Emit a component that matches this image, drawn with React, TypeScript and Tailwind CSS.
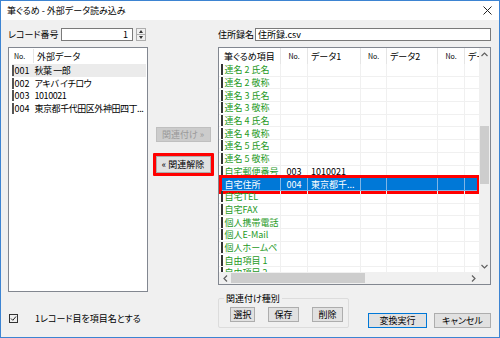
import React from "react";

const FONT = "font-['Noto_Sans_CJK_JP','Noto_Sans',sans-serif] [font-feature-settings:'palt']";

const gridRows: [string, string, string, boolean][] = [
  ["連名 2 氏名", "", "", false],
  ["連名 2 敬称", "", "", false],
  ["連名 3 氏名", "", "", false],
  ["連名 3 敬称", "", "", false],
  ["連名 4 氏名", "", "", false],
  ["連名 4 敬称", "", "", false],
  ["連名 5 氏名", "", "", false],
  ["連名 5 敬称", "", "", false],
  ["自宅郵便番号", "003", "1010021", false],
  ["自宅住所", "004", "東京都千...", true],
  ["自宅TEL", "", "", false],
  ["自宅FAX", "", "", false],
  ["個人携帯電話", "", "", false],
  ["個人E-Mail", "", "", false],
  ["個人ホームペ", "", "", false],
  ["自由項目 1", "", "", false],
  ["自由項目 2", "", "", false],
];

const leftRows = [
  ["001", "秋葉 一郎"],
  ["002", "アキバ イチロウ"],
  ["003", "1010021"],
  ["004", "東京都千代田区外神田四丁..."],
];

const COLS = "grid grid-cols-[62px_27px_53px_26px_51px_27px_15px]";

function Btn({ children, w, primary, disabled }: { children: React.ReactNode; w: string; primary?: boolean; disabled?: boolean }) {
  return (
    <div
      className={`${w} h-[15px] flex items-center justify-center border text-[9px] leading-none whitespace-nowrap ${
        disabled
          ? "bg-[#cccccc] border-[#bfbfbf] text-[#9a9a9a]"
          : primary
          ? "bg-[#e1e1e1] border-[#0078d7] text-black"
          : "bg-[#e1e1e1] border-[#adadad] text-black"
      }`}
    >
      {children}
    </div>
  );
}

export default function App() {
  return (
    <div className={`w-[500px] h-[338px] border border-[#3d84d2] bg-[#f0f0f0] flex flex-col text-black ${FONT}`}>
      {/* title bar */}
      <div className="h-[19px] bg-white flex items-center justify-between pl-[6px] pr-[6px] text-[9px] leading-none">
        <span>筆ぐるめ - 外部データ読み込み</span>
        <svg width="9" height="9" viewBox="0 0 9 9" className="mr-[1px]">
          <path d="M0.5 0.5 L8.5 8.5 M8.5 0.5 L0.5 8.5" stroke="#222" strokeWidth="1" />
        </svg>
      </div>

      <div className="flex flex-1">
        {/* left column */}
        <div className="ml-[7px] w-[140px] flex flex-col">
          <div className="mt-[8px] h-[13px] flex items-center text-[9px] leading-none">
            <span className="w-[53px]">レコード番号</span>
            <div className="w-[72px] h-[13px] bg-white border border-[#7a7a7a] flex items-center justify-end pr-[4px]">1</div>
            <div className="ml-[3px] w-[10px] h-[13px] flex flex-col border border-[#adadad] bg-[#f0f0f0]">
              <div className="flex-1 flex items-center justify-center border-b border-[#adadad]">
                <div className="w-0 h-0 border-l-[2.5px] border-r-[2.5px] border-b-[3px] border-l-transparent border-r-transparent border-b-[#333]" />
              </div>
              <div className="flex-1 flex items-center justify-center">
                <div className="w-0 h-0 border-l-[2.5px] border-r-[2.5px] border-t-[3px] border-l-transparent border-r-transparent border-t-[#333]" />
              </div>
            </div>
          </div>
          <div className="mt-[6px] h-[245px] bg-white border border-[#828790] flex flex-col text-[9px] leading-none">
            <div className="h-[16px] flex items-center">
              <span className="w-[24px] pl-[5px] text-[7px]">No.</span>
              <span className="h-[14px] border-l border-[#e5e5e5] pl-[3px] flex items-center">外部データ</span>
            </div>
            {leftRows.map(([no, name], i) => (
              <div key={no} className={`h-[12.7px] flex items-center ml-[3px] mr-[1px] whitespace-nowrap overflow-hidden ${i === 0 ? "bg-[#ebebeb]" : ""}`}>
                <div className="w-[1.5px] h-[11px] bg-[#555] shrink-0" />
                <span className="w-[21px] pl-[1px] shrink-0">{no}</span>
                <span className="tracking-[-0.45px]">{name}</span>
              </div>
            ))}
          </div>
          <div className="mt-[21px] h-[10px] flex items-center text-[9px] leading-none">
            <div className="w-[9px] h-[9px] ml-[1px] border border-[#333] bg-[#f0f0f0] flex items-center justify-center">
              <svg width="7" height="7" viewBox="0 0 7 7">
                <path d="M1 3.5 L2.8 5.3 L6 1.5" stroke="#222" strokeWidth="1" fill="none" />
              </svg>
            </div>
            <span className="ml-[17px]">1レコード目を項目名とする</span>
          </div>
        </div>

        {/* middle buttons */}
        <div className="w-[70px] flex flex-col items-center pt-[107px]">
          <Btn w="w-[55px]" disabled>関連付け »</Btn>
          <div className="relative mt-[14px]">
            <div className="w-[55px] h-[17px] flex items-center justify-center border border-[#adadad] bg-[#e1e1e1] text-[9px] leading-none">« 関連解除</div>
            <div className="absolute -inset-[3px] border-[3px] border-[#ff0000] rounded-[1px]" />
          </div>
        </div>

        {/* right column */}
        <div className="w-[273px] flex flex-col">
          <div className="mt-[8px] h-[13px] flex items-center text-[9px] leading-none">
            <span className="w-[37px]">住所録名</span>
            <div className="flex-1 h-[13px] bg-white border border-[#7a7a7a] flex items-center pl-[2px]">住所録.csv</div>
          </div>
          <div className="mt-[6px] h-[238px] bg-white border border-[#828790] flex flex-col text-[9px] leading-none overflow-hidden">
            <div className="flex flex-1 min-h-0">
              <div className="flex-1 flex flex-col overflow-hidden">
                <div className={`${COLS} h-[16px] shrink-0`}>
                  {["筆ぐるめ項目", "No.", "データ1", "No.", "データ2", "No.", "デー"].map((h, i) => (
                    <div
                      key={i}
                      className={`flex items-center border-r border-[#e5e5e5] overflow-hidden whitespace-nowrap ${
                        i === 0 ? "pl-[5px]" : i % 2 === 1 ? "justify-center text-[7px]" : "pl-[3px]"
                      } ${i === 6 ? "border-r-0" : ""}`}
                    >
                      {h}
                    </div>
                  ))}
                </div>
                {gridRows.map(([name, no, data, sel]) => (
                  <div key={name} className="relative">
                    <div className={`${COLS} h-[12.7px] ${sel ? "bg-[#0078d7] text-white" : ""}`}>
                      <div className={`flex items-center pl-[2px] border-r border-b ${sel ? "border-[#7fb5e6]" : "border-[#f0f0f0]"}`}>
                        <div className={`w-[1.5px] h-[11px] ${sel ? "bg-[#0078d7]" : "bg-[#333]"}`} />
                        <span className={`ml-[2px] whitespace-nowrap ${sel ? "text-white" : "text-[#1f9a1f]"}`}>{name}</span>
                      </div>
                      <div className={`flex items-center justify-center border-r border-b ${sel ? "border-[#7fb5e6]" : "border-[#f0f0f0]"}`}>{no}</div>
                      <div className={`flex items-center pl-[3px] border-r border-b whitespace-nowrap ${sel ? "border-[#7fb5e6]" : "border-[#f0f0f0]"}`}>{data}</div>
                      <div className={`border-r border-b ${sel ? "border-[#7fb5e6]" : "border-[#f0f0f0]"}`} />
                      <div className={`border-r border-b ${sel ? "border-[#7fb5e6]" : "border-[#f0f0f0]"}`} />
                      <div className={`border-r border-b ${sel ? "border-[#7fb5e6]" : "border-[#f0f0f0]"}`} />
                      <div className={`border-b ${sel ? "border-[#7fb5e6]" : "border-[#f0f0f0]"}`} />
                    </div>
                    {sel && <div className="absolute left-0 -right-[1px] -top-[3px] -bottom-[3px] border-[3px] border-[#ff0000]" />}
                  </div>
                ))}
              </div>
              {/* vertical scrollbar */}
              <div className="w-[11px] bg-[#f0f0f0] flex flex-col items-center">
                <div className="h-[12px] flex items-center justify-center">
                  <svg width="7" height="5" viewBox="0 0 7 5"><path d="M0.5 4 L3.5 1 L6.5 4" stroke="#606060" strokeWidth="1.2" fill="none" /></svg>
                </div>
                <div className="mt-[66px] w-[9px] h-[58px] bg-[#cdcdcd]" />
                <div className="flex-1" />
                <div className="h-[12px] flex items-center justify-center">
                  <svg width="7" height="5" viewBox="0 0 7 5"><path d="M0.5 1 L3.5 4 L6.5 1" stroke="#606060" strokeWidth="1.2" fill="none" /></svg>
                </div>
              </div>
            </div>
            {/* horizontal scrollbar */}
            <div className="h-[12px] shrink-0 flex bg-[#f0f0f0]">
              <div className="w-[12px] flex items-center justify-center">
                <svg width="5" height="7" viewBox="0 0 5 7"><path d="M4 0.5 L1 3.5 L4 6.5" stroke="#606060" strokeWidth="1.2" fill="none" /></svg>
              </div>
              <div className="w-[134px] h-[10px] my-[1px] bg-[#cdcdcd]" />
              <div className="flex-1" />
              <div className="w-[12px] flex items-center justify-center">
                <svg width="5" height="7" viewBox="0 0 5 7"><path d="M1 0.5 L4 3.5 L1 6.5" stroke="#606060" strokeWidth="1.2" fill="none" /></svg>
              </div>
              <div className="w-[11px]" />
            </div>
          </div>
          <div className="mt-[13px] flex items-end">
            <div className="relative w-[131px] h-[30px] border border-[#dcdcdc] rounded-[2px] flex items-start gap-[13px] pl-[11px] pt-[8px]">
              <span className="absolute -top-[5px] left-[5px] bg-[#f0f0f0] px-[2px] text-[9px] leading-none">関連付け種別</span>
              <Btn w="w-[25px]">選択</Btn>
              <Btn w="w-[31px]">保存</Btn>
              <Btn w="w-[31px]">削除</Btn>
            </div>
            <div className="ml-auto flex gap-[7px]">
              <Btn w="w-[59px]" primary>変換実行</Btn>
              <Btn w="w-[57px]">キャンセル</Btn>
            </div>
          </div>
        </div>
      </div>
    </div>
  );
}
